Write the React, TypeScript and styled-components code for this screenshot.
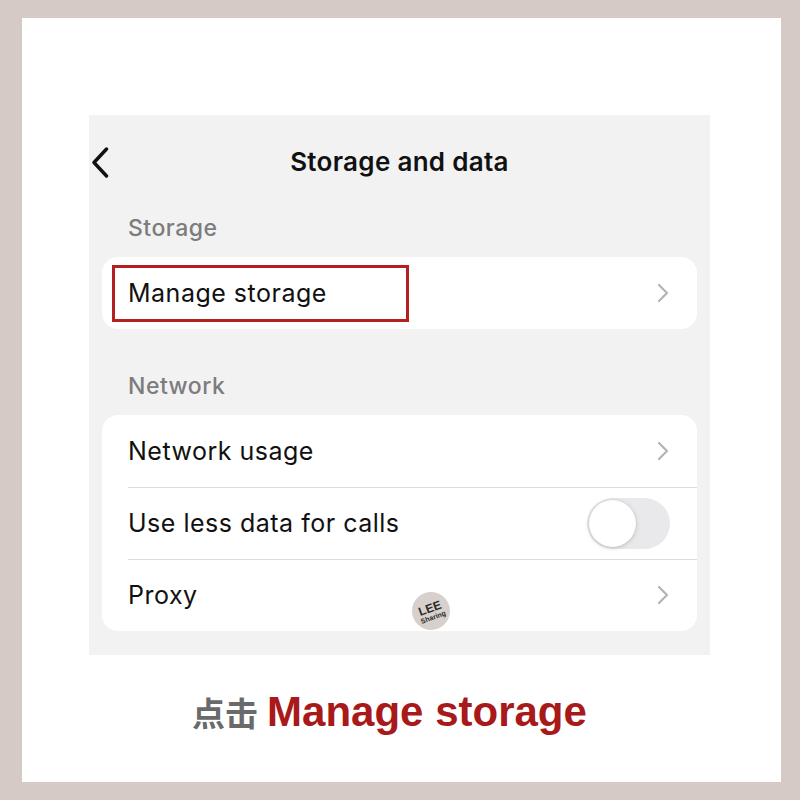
import React, { useState } from 'react';
import styled, { createGlobalStyle } from 'styled-components';

const GlobalStyle = createGlobalStyle`
  html, body {
    margin: 0;
    padding: 0;
    background: #d6cac7;
  }
`;

const ChevronRight = () => (
  <svg width="12" height="20" viewBox="0 0 12 20" fill="none">
    <path d="M2 2l8 8-8 8" stroke="#b4b4b8" strokeWidth="2.2" strokeLinecap="round" strokeLinejoin="round" />
  </svg>
);

const BackIcon = () => (
  <svg width="18" height="31" viewBox="0 0 18 31" fill="none">
    <path d="M15.5 2L3 15.5l12.5 13.5" stroke="#111" strokeWidth="3.4" strokeLinecap="round" strokeLinejoin="round" />
  </svg>
);

const App = () => {
  const [lessData, setLessData] = useState(false);

  return (
    <>
      <GlobalStyle />
      <Page>
        <Frame>
          <Screen>
            <NavBar>
              <BackButton>
                <BackIcon />
              </BackButton>
              <Title>Storage and data</Title>
            </NavBar>

            <SectionHeader>Storage</SectionHeader>
            <Card>
              <Row>
                <Highlight />
                <RowLabel>Manage storage</RowLabel>
                <ChevronRight />
              </Row>
            </Card>

            <SectionHeader $gapTop>Network</SectionHeader>
            <Card>
              <Row>
                <RowLabel>Network usage</RowLabel>
                <ChevronRight />
              </Row>
              <Row $divider>
                <RowLabel>Use less data for calls</RowLabel>
                <Toggle $on={lessData} onClick={() => setLessData(!lessData)}>
                  <Knob $on={lessData} />
                </Toggle>
              </Row>
              <Row $divider>
                <RowLabel>Proxy</RowLabel>
                <ChevronRight />
                <Watermark>
                  <span>LEE</span>
                  <small>Sharing</small>
                </Watermark>
              </Row>
            </Card>
          </Screen>

          <Caption>
            <CaptionCn>点击</CaptionCn>
            <CaptionEn>Manage storage</CaptionEn>
          </Caption>
        </Frame>
      </Page>
    </>
  );
};

export default App;

const Page = styled.div`
  width: 800px;
  height: 800px;
  box-sizing: border-box;
  padding: 18px 19px 18px 22px;
`;

const Frame = styled.div`
  display: flex;
  flex-direction: column;
  align-items: center;
  width: 100%;
  height: 100%;
  background: #ffffff;
  padding-top: 97px;
  box-sizing: border-box;
`;

const Screen = styled.div`
  position: relative;
  width: 621px;
  height: 540px;
  transform: translateX(-2px);
  background: #f2f2f2;
  box-sizing: border-box;
  padding: 0 13px;
  font-family: Inter, "Liberation Sans", sans-serif;
`;

const NavBar = styled.div`
  position: relative;
  display: flex;
  align-items: center;
  justify-content: center;
  height: 96px;
`;

const BackButton = styled.div`
  position: absolute;
  left: -11px;
  top: 32px;
  display: flex;
`;

const Title = styled.div`
  font-size: 26px;
  font-weight: 600;
  color: #111;
  letter-spacing: 0.3px;
  margin-top: -3px;
`;

const SectionHeader = styled.div<{ $gapTop?: boolean }>`
  font-size: 23px;
  font-weight: 500;
  color: #7c7c7f;
  letter-spacing: 0.5px;
  padding-left: 26px;
  margin-top: ${(p) => (p.$gapTop ? '40px' : '0')};
  height: 46px;
  line-height: 34px;
`;

const Card = styled.div`
  background: #ffffff;
  border-radius: 16px;
`;

const Row = styled.div<{ $divider?: boolean }>`
  position: relative;
  display: flex;
  align-items: center;
  justify-content: space-between;
  height: 72px;
  padding: 0 28px 0 26px;
  box-sizing: border-box;

  ${(p) =>
    p.$divider &&
    `
    &::before {
      content: '';
      position: absolute;
      top: 0;
      left: 26px;
      right: 0;
      height: 1px;
      background: #dcdcde;
    }
  `}
`;

const RowLabel = styled.div`
  font-size: 25px;
  font-weight: 400;
  color: #111;
  letter-spacing: 0.5px;
`;

const Highlight = styled.div`
  position: absolute;
  left: 10px;
  top: 8px;
  width: 297px;
  height: 57px;
  border: 3px solid #b3201f;
  box-sizing: border-box;
  pointer-events: none;
`;

const Toggle = styled.div<{ $on: boolean }>`
  position: relative;
  width: 83px;
  height: 51px;
  border-radius: 26px;
  background: ${(p) => (p.$on ? '#34c759' : '#e9e9eb')};
  margin-right: -1px;
  cursor: pointer;
`;

const Knob = styled.div<{ $on: boolean }>`
  position: absolute;
  top: 2px;
  left: ${(p) => (p.$on ? '34px' : '2px')};
  width: 47px;
  height: 47px;
  border-radius: 50%;
  background: #ffffff;
  box-shadow: 0 1px 4px rgba(0, 0, 0, 0.18), 0 0 0 0.5px rgba(0, 0, 0, 0.06);
`;

const Watermark = styled.div`
  position: absolute;
  left: 310px;
  top: 33px;
  width: 38px;
  height: 38px;
  border-radius: 50%;
  background: #d8d0cd;
  display: flex;
  flex-direction: column;
  align-items: center;
  justify-content: center;
  transform: rotate(-20deg);
  font-family: "Liberation Sans", Arial, sans-serif;
  color: #2a2a2a;
  line-height: 1;

  span {
    font-size: 12px;
    font-weight: 700;
  }

  small {
    font-size: 7px;
    font-weight: 700;
  }
`;

const Caption = styled.div`
  display: flex;
  align-items: baseline;
  gap: 9px;
  margin-top: 33px;
  transform: translateX(-12px);
`;

const CaptionCn = styled.span`
  font-family: "Noto Sans CJK SC", sans-serif;
  font-size: 33px;
  font-weight: 700;
  color: #6a6a6a;
`;

const CaptionEn = styled.span`
  font-family: "Liberation Sans", Arial, sans-serif;
  font-size: 42px;
  font-weight: 700;
  color: #a8191a;
`;
